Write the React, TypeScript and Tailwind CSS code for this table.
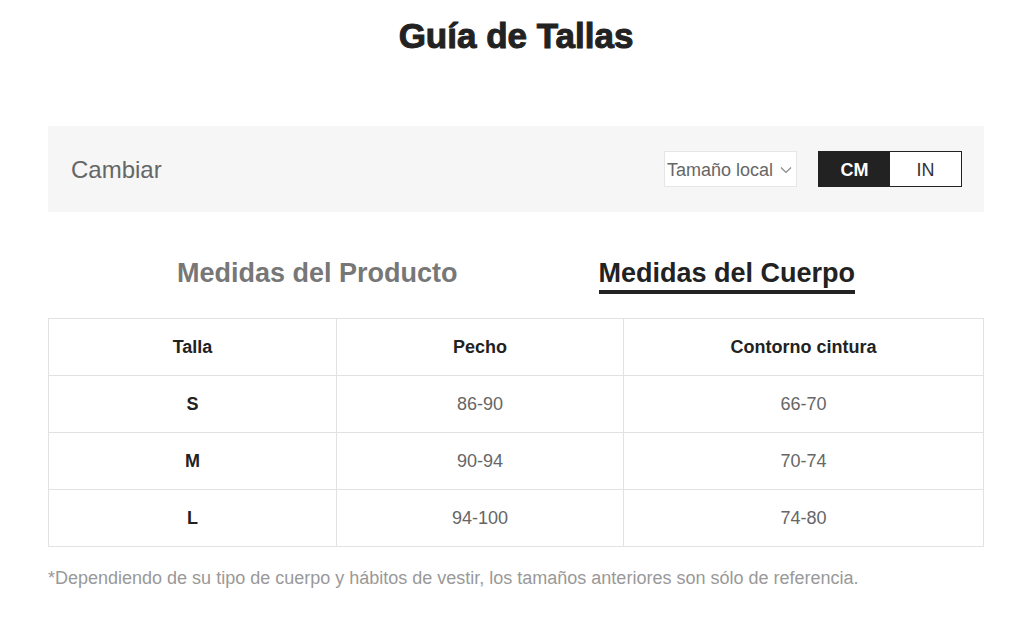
import { useState } from "react";

const rows = [
  { size: "S", chest: "86-90", waist: "66-70" },
  { size: "M", chest: "90-94", waist: "70-74" },
  { size: "L", chest: "94-100", waist: "74-80" },
];

export default function App() {
  const [unit, setUnit] = useState<"cm" | "in">("cm");
  const [tab, setTab] = useState<"product" | "body">("body");

  return (
    <div className="min-h-screen bg-white font-['Liberation_Sans',Arial,sans-serif]">
      <div className="ml-[48px] w-[936px] pt-[14px]">
        <h1 className="text-center text-[35px] leading-[44px] font-bold text-[#222] [-webkit-text-stroke:1px_#222]">
          Guía de Tallas
        </h1>

        <div className="mt-[68px] flex h-[86px] items-center justify-between bg-[#f6f6f6] pl-[23px] pr-[22px]">
          <span className="pt-[2px] text-[24px] text-[#666]">Cambiar</span>
          <div className="flex items-center gap-[21px]">
            <button className="flex h-[36px] w-[133px] items-center gap-[7px] border border-[#e6e6e6] bg-white pl-[2px] pt-[2px] text-[18px] text-[#666]">
              Tamaño local
              <svg width="12" height="8" viewBox="0 0 12 8" fill="none" stroke="#888" strokeWidth="1.2">
                <path d="M1 1.5l5 5 5-5" />
              </svg>
            </button>
            <div className="flex h-[36px] border border-[#222]">
              <button
                onClick={() => setUnit("cm")}
                className={`w-[71px] pt-[2px] text-[18px] ${unit === "cm" ? "bg-[#222] text-white font-bold" : "bg-white text-[#333]"}`}
              >
                CM
              </button>
              <button
                onClick={() => setUnit("in")}
                className={`w-[71px] pt-[2px] text-[18px] ${unit === "in" ? "bg-[#222] text-white font-bold" : "bg-white text-[#333]"}`}
              >
                IN
              </button>
            </div>
          </div>
        </div>

        <div className="mt-[44px] flex justify-center gap-[141px]">
          <button
            onClick={() => setTab("product")}
            className={`pt-[1px] pb-[1px] text-[27px] leading-[32px] font-bold border-b-4 ${tab === "product" ? "text-[#222] border-[#222]" : "text-[#777] border-transparent"}`}
          >
            Medidas del Producto
          </button>
          <button
            onClick={() => setTab("body")}
            className={`pt-[1px] pb-[1px] text-[27px] leading-[32px] font-bold border-b-4 ${tab === "body" ? "text-[#222] border-[#222]" : "text-[#777] border-transparent"}`}
          >
            Medidas del Cuerpo
          </button>
        </div>

        <table className="mt-[24px] w-full border-collapse text-center">
          <colgroup>
            <col className="w-[288px]" />
            <col className="w-[287px]" />
            <col />
          </colgroup>
          <thead>
            <tr className="h-[57px]">
              <th className="border border-[#e2e2e2] text-[18px] font-bold text-[#222]">Talla</th>
              <th className="border border-[#e2e2e2] text-[18px] font-bold text-[#222]">Pecho</th>
              <th className="border border-[#e2e2e2] text-[18px] font-bold text-[#222]">Contorno cintura</th>
            </tr>
          </thead>
          <tbody>
            {rows.map((r) => (
              <tr key={r.size} className="h-[57px]">
                <td className="border border-[#e2e2e2] text-[18px] font-bold text-[#222]">{r.size}</td>
                <td className="border border-[#e2e2e2] text-[18px] text-[#666]">{r.chest}</td>
                <td className="border border-[#e2e2e2] text-[18px] text-[#666]">{r.waist}</td>
              </tr>
            ))}
          </tbody>
        </table>

        <p className="mt-[18px] text-[18px] text-[#999]">
          *Dependiendo de su tipo de cuerpo y hábitos de vestir, los tamaños anteriores son sólo de referencia.
        </p>
      </div>
    </div>
  );
}
